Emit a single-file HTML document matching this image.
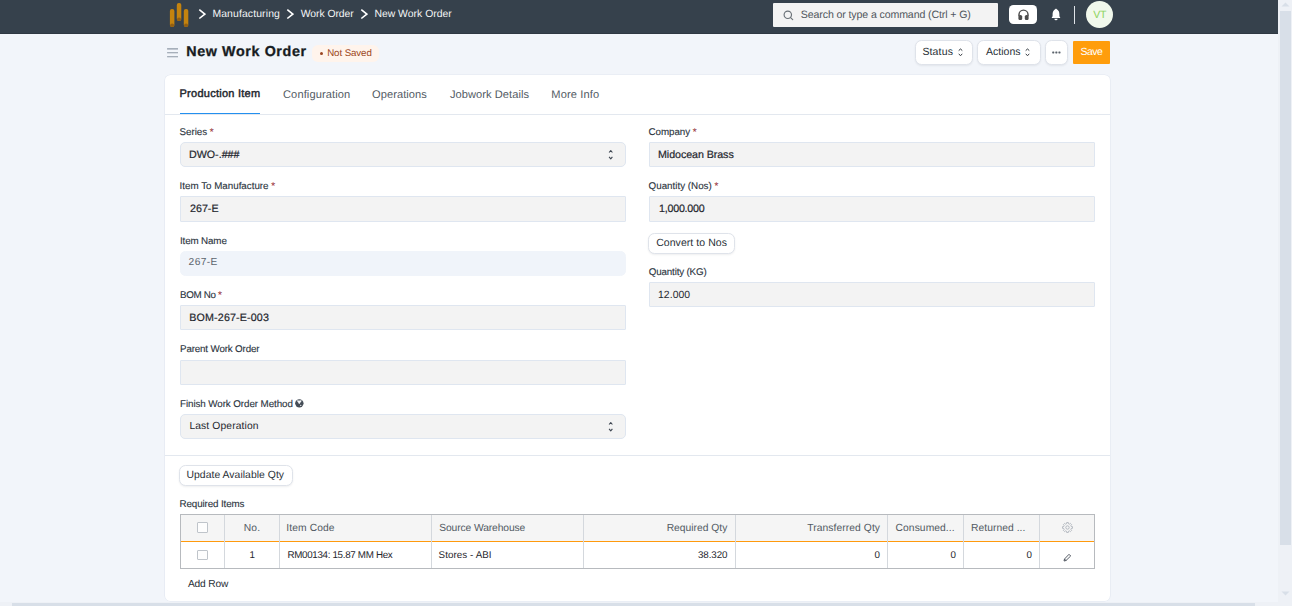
<!DOCTYPE html>
<html lang="en">
<head>
<meta charset="utf-8">
<title>New Work Order</title>
<style>
*{box-sizing:border-box;margin:0;padding:0}
html,body{width:1292px;height:606px;overflow:hidden;background:#f2f5fa}
body{position:relative;font-family:"Liberation Sans",sans-serif;font-size:11.7px;color:#1f272e;-webkit-font-smoothing:antialiased;text-rendering:geometricPrecision}
.abs{position:absolute}
span.t{position:absolute;white-space:nowrap;line-height:1}

/* navbar */
nav.navbar{position:absolute;left:0;top:0;width:1278px;height:34px;background:#36414c;border-bottom:1px solid #2f3842}
nav .crumb{color:#f4f5f6;font-size:10.8px}
.search{position:absolute;left:773px;top:3px;width:225px;height:24px;background:#f3f3f3;border-radius:1px}
.search span{color:#50565c;font-size:10.8px}
.help{position:absolute;left:1008.8px;top:4.7px;width:28.4px;height:19.6px;background:#fff;border-radius:4.5px}
.vbar{position:absolute;left:1074px;top:6px;width:1px;height:18px;background:#dfe3e8}
.avatar{position:absolute;left:1085.9px;top:.7px;width:27.2px;height:27.2px;border-radius:50%;background:#f1f8ec;color:#8ed45c;font-size:11.5px;text-align:center;line-height:27px}

/* page head */
.title{font-weight:bold;font-size:14.4px;color:#171c22;-webkit-text-stroke:.3px #171c22}
.pill{position:absolute;left:312px;top:44.5px;width:67px;height:17px;border-radius:6px;background:#fff4ec}
.pill span{color:#9c4621;font-size:9.9px}
.btn{position:absolute;background:#fff;border-radius:6.5px;border:1px solid #dfe3ea;box-shadow:0 1px 2px rgba(40,50,70,.08);color:#2a3138;font-size:11.7px}
.btn.primary{background:#ff9d0c;color:#fff;border-radius:1px;box-shadow:none;border:0}

/* card */
.card{position:absolute;left:165px;top:75px;width:945px;height:526px;background:#fff;border-radius:5.5px;box-shadow:0 0 0 .6px #e2e7f0}
.tabs{position:absolute;left:0;top:0;width:945px;height:39.5px;border-bottom:1px solid #e3e8ef}
.tab{color:#525a63;font-size:11.7px}
.tab.active{color:#1f272e;-webkit-text-stroke:.45px #1f272e}
.tab-underline{position:absolute;left:15px;top:38px;width:80px;height:1.3px;background:#2490ef}
.sec-border{position:absolute;left:0;top:380px;width:945px;height:1px;background:#e3e8ef}

label.t{position:absolute;white-space:nowrap;line-height:1;color:#2b3440;font-size:10.8px;-webkit-text-stroke:.12px #2b3440}
label .req{color:#e03636}
.ctl{position:absolute;height:24.5px;background:#f3f3f3;border:1px solid #dfe6f0;border-radius:1px;font-size:11.7px;color:#1f272e}
.ctl.sel{border-radius:5px}
.ctl.ro{background:#f0f4fa;border-color:#f0f4fa;border-radius:5.5px;color:#5c646d}
.ctl span{left:9px;top:6px}
.ctl .m{-webkit-text-stroke:.2px #1f272e}

/* grid */
.grid{position:absolute;left:15px;top:439px;width:915px;height:55px;border:1px solid #b7babe;background:#fff}
.grid .head{position:absolute;left:0;top:0;width:913px;height:27.2px;background:#f5f5f5;border-bottom:1.2px solid #ff9a0d}
.grid .vl{position:absolute;top:0;width:1px;height:53px;background:#d4d8dd}
.grid .h{color:#525a63;font-size:11.7px}
.grid .c{color:#1f272e;font-size:10.5px}
.chk{position:absolute;width:11px;height:11px;border:1px solid #bfc4ca;border-radius:1px;background:#fdfdfd}

/* fake scrollbars */
.vscroll{position:absolute;left:1278px;top:0;width:14px;height:606px;background:#eef1f6}
.vscroll .thumb{position:absolute;left:2px;top:11px;width:11px;height:534px;background:#d8dfe8}
.hscroll{position:absolute;left:0;top:601.5px;width:1278px;height:5px;background:#eef1f6}
.hscroll .thumb{position:absolute;left:12px;top:1.5px;width:1243px;height:4px;background:#d8dfe8}

/* text placement */
#c1{left:212.4px;top:9.81px;font-size:10.4px;letter-spacing:0.135px}
#c2{left:300.8px;top:9.81px;font-size:10.4px;letter-spacing:-0.06px}
#c3{left:374.4px;top:9.81px;font-size:10.4px;letter-spacing:0.014px}
#s1{left:27.8px;top:6.65px;font-size:10.6px;letter-spacing:-0.116px}
#title{left:186.2px;top:45.03px;font-size:14.3px;letter-spacing:0.624px}
#ns{left:15.2px;top:4.5px;font-size:9.7px;letter-spacing:-0.078px}
#b1{left:6.4px;top:6.03px;font-size:10.5px;letter-spacing:0.144px}
#b2{left:7.9px;top:6.03px;font-size:10.5px;letter-spacing:0.03px}
#b3{left:7.4px;top:5.93px;font-size:10.5px;letter-spacing:-0.48px}
#t1{left:14.5px;top:13.99px;font-size:11px;letter-spacing:0.257px}
#t2{left:118px;top:14.8px;font-size:11.1px;letter-spacing:0.105px}
#t3{left:207.1px;top:14.8px;font-size:11.1px;letter-spacing:0.04px}
#t4{left:285px;top:14.8px;font-size:11.1px;letter-spacing:0.051px}
#t5{left:386.3px;top:14.8px;font-size:11.1px;letter-spacing:0.135px}
#l1{left:14.6px;top:52.97px;font-size:9.8px;letter-spacing:-0.051px}
#v1{left:8px;top:6.75px;font-size:10.7px;letter-spacing:0px}
#l2{left:14.6px;top:106.56px;font-size:9.8px;letter-spacing:-0.009px}
#v2{left:9px;top:6.75px;font-size:10.7px;letter-spacing:0px}
#l3{left:15px;top:161.76px;font-size:9.8px;letter-spacing:-0.135px}
#v3{left:7.6px;top:6.07px;font-size:10.2px;letter-spacing:0.405px}
#l4{left:15px;top:215.56px;font-size:9.8px;letter-spacing:-0.334px}
#v4{left:8.3px;top:6.26px;font-size:10.7px;letter-spacing:0.15px}
#l5{left:15px;top:269.97px;font-size:9.8px;letter-spacing:-0.158px}
#l6{left:15px;top:324.66px;font-size:9.8px;letter-spacing:-0.078px}
#v6{left:8.4px;top:6.79px;font-size:10.3px;letter-spacing:0.125px}
#r1{left:483.6px;top:52.97px;font-size:9.8px;letter-spacing:-0.068px}
#w1{left:8px;top:6.75px;font-size:10.7px;letter-spacing:-0.069px}
#r2{left:483.6px;top:106.56px;font-size:9.8px;letter-spacing:0px}
#w2{left:9px;top:6.75px;font-size:10.7px;letter-spacing:-0.225px}
#w3{left:7px;top:3.72px;font-size:10.5px;letter-spacing:0.055px}
#r4{left:483.8px;top:193.05px;font-size:9.8px;letter-spacing:-0.165px}
#w4{left:8px;top:7.59px;font-size:10.4px;letter-spacing:0.072px}
#u1{left:6.5px;top:4.59px;font-size:10.4px;letter-spacing:0.038px}
#g0{left:14.6px;top:424.76px;font-size:9.8px;letter-spacing:-0.125px}
#h1{left:62.8px;top:8.9px;font-size:10.3px;letter-spacing:0.09px}
#h2{left:105.2px;top:8.9px;font-size:10.3px;letter-spacing:0.113px}
#h3{left:258.2px;top:8.9px;font-size:10.3px;letter-spacing:-0.108px}
#h4{left:485.7px;top:8.9px;font-size:10.3px;letter-spacing:0px}
#h5{left:626.2px;top:8.9px;font-size:10.3px;letter-spacing:0.077px}
#h6{left:714.6px;top:8.9px;font-size:10.3px;letter-spacing:0.054px}
#h7{left:790px;top:8.9px;font-size:10.3px;letter-spacing:0.049px}
#d1{left:68.6px;top:35.62px;font-size:9.8px;letter-spacing:0px}
#d2{left:106.4px;top:35.62px;font-size:9.8px;letter-spacing:-0.315px}
#d3{left:257.6px;top:35.62px;font-size:9.8px;letter-spacing:0.065px}
#d4{left:516.9px;top:35.62px;font-size:9.8px;letter-spacing:-0.072px}
#d5{left:693.4px;top:35.62px;font-size:9.8px;letter-spacing:0px}
#d6{left:769.4px;top:35.62px;font-size:9.8px;letter-spacing:0px}
#d7{left:845.4px;top:35.62px;font-size:9.8px;letter-spacing:0px}
#ar{left:22.9px;top:504.67px;font-size:10.2px;letter-spacing:-0.135px}
#av{left:7.4px;top:8.83px;font-size:10.6px;letter-spacing:-0.3px}
</style>
</head>
<body>

<nav class="navbar">
  <svg class="abs" style="left:169px;top:2px" width="21" height="26" viewBox="0 0 21 26">
    <rect x="0.9" y="7" width="4.5" height="17.9" rx="2" fill="#c4830f"/><ellipse cx="3.15" cy="23.2" rx="2" ry="1.7" fill="#935f12"/>
    <rect x="7.8" y="0.9" width="4.5" height="18" rx="2" fill="#c4830f"/><ellipse cx="10.05" cy="17.2" rx="2" ry="1.7" fill="#935f12"/>
    <rect x="14.8" y="7" width="4.5" height="17.9" rx="2" fill="#c4830f"/><ellipse cx="17.05" cy="23.2" rx="2" ry="1.7" fill="#935f12"/>
  </svg>
  <svg class="abs" style="left:198px;top:9px" width="8" height="11" viewBox="0 0 8 11"><path d="M1.3 0.7 L6.8 5.1 L1.3 9.5" fill="none" stroke="#fff" stroke-width="1.6"/></svg>
  <span class="t crumb" id="c1">Manufacturing</span>
  <svg class="abs" style="left:286.1px;top:9px" width="8" height="11" viewBox="0 0 8 11"><path d="M1.3 0.7 L6.8 5.1 L1.3 9.5" fill="none" stroke="#fff" stroke-width="1.6"/></svg>
  <span class="t crumb" id="c2">Work Order</span>
  <svg class="abs" style="left:360.4px;top:9px" width="8" height="11" viewBox="0 0 8 11"><path d="M1.3 0.7 L6.8 5.1 L1.3 9.5" fill="none" stroke="#fff" stroke-width="1.6"/></svg>
  <span class="t crumb" id="c3">New Work Order</span>

  <div class="search">
    <svg class="abs" style="left:10px;top:6.5px" width="11" height="11" viewBox="0 0 11 11"><circle cx="4.8" cy="4.8" r="3.7" fill="none" stroke="#6a7177" stroke-width="1.15"/><path d="M7.6 7.6 L9.7 9.7" stroke="#6a7177" stroke-width="1.15" stroke-linecap="round"/></svg>
    <span class="t" id="s1">Search or type a command (Ctrl + G)</span>
  </div>
  <div class="help">
    <svg class="abs" style="left:9.1px;top:4.1px" width="11" height="11.5" viewBox="0 0 11 11.5"><path d="M1 7 V5.6 A4.5 4.5 0 0 1 10 5.6 V7" fill="none" stroke="#4d4d4d" stroke-width="1.45"/><rect x="0.4" y="5.9" width="3.8" height="5.2" rx="1.7" fill="#4d4d4d"/><rect x="6.8" y="5.9" width="3.8" height="5.2" rx="1.7" fill="#4d4d4d"/></svg>
  </div>
  <svg class="abs" style="left:1050.7px;top:8px" width="10" height="13" viewBox="0 0 10 13"><path d="M5 0.6 C5.6 1.3 6.6 1.8 7.4 2.8 C8.2 3.8 8.4 5 8.4 6.5 V8.3 L9.2 9.5 V10 H0.8 V9.5 L1.6 8.3 V6.5 C1.6 5 1.8 3.8 2.6 2.8 C3.4 1.8 4.4 1.3 5 0.6 Z M3.4 10.7 H6.6 A1.6 1.5 0 0 1 3.4 10.7 Z" fill="#fff"/></svg>
  <div class="vbar"></div>
  <div class="avatar"><span class="t" id="av">VT</span></div>
</nav>

<header>
  <svg class="abs" style="left:167px;top:47.7px" width="11.2" height="10" viewBox="0 0 11 10"><path d="M0 0.9 H11 M0 4.8 H11 M0 8.7 H11" stroke="#8d98a5" stroke-width="1.1"/></svg>
  <span class="t title" id="title">New Work Order</span>
  <div class="pill"><i class="abs" style="left:7.6px;top:7.3px;width:3.2px;height:3.2px;border-radius:50%;background:#9c4621"></i><span class="t" id="ns">Not Saved</span></div>

  <div class="btn" style="left:915px;top:40px;width:58px;height:25px"><span class="t" id="b1">Status</span>
    <svg class="abs" style="left:42.2px;top:7.3px" width="5" height="8.5" viewBox="0 0 5 8.5"><path d="M0.7 2.6 L2.5 1 L4.3 2.6 M0.7 6 L2.5 7.5 L4.3 6" fill="none" stroke="#2a3138" stroke-width="1"/></svg></div>
  <div class="btn" style="left:977px;top:40px;width:64px;height:25px"><span class="t" id="b2">Actions</span>
    <svg class="abs" style="left:47.3px;top:7.3px" width="5" height="8.5" viewBox="0 0 5 8.5"><path d="M0.7 2.6 L2.5 1 L4.3 2.6 M0.7 6 L2.5 7.5 L4.3 6" fill="none" stroke="#2a3138" stroke-width="1"/></svg></div>
  <div class="btn" style="left:1045px;top:40px;width:23px;height:25px"><svg class="abs" style="left:5.7px;top:9.8px" width="9" height="3" viewBox="0 0 9 3"><rect x="0.2" y="0.5" width="2.1" height="1.9" rx="0.6" fill="#5a626b"/><rect x="3.3" y="0.5" width="2.1" height="1.9" rx="0.6" fill="#5a626b"/><rect x="6.4" y="0.5" width="2.1" height="1.9" rx="0.6" fill="#5a626b"/></svg></div>
  <div class="btn primary" style="left:1073px;top:41px;width:37px;height:23px"><span class="t" id="b3">Save</span></div>
</header>

<main class="card">
  <div class="tabs">
    <span class="t tab active" id="t1">Production Item</span>
    <span class="t tab" id="t2">Configuration</span>
    <span class="t tab" id="t3">Operations</span>
    <span class="t tab" id="t4">Jobwork Details</span>
    <span class="t tab" id="t5">More Info</span>
    <div class="tab-underline"></div>
  </div>

  <section>
    <label class="t" id="l1">Series <span class="req">*</span></label>
    <div class="ctl sel" style="left:15px;top:67px;width:446px;height:25px"><span class="t m" id="v1">DWO-.###</span>
      <svg class="abs" style="left:427.3px;top:6.3px" width="5.5" height="11.4" viewBox="0 0 5.5 11.4"><path d="M1.1 3.5 L2.75 1.5 L4.4 3.5 M1.1 7.9 L2.75 9.9 L4.4 7.9" fill="none" stroke="#3f4752" stroke-width="1.1" stroke-linejoin="round"/></svg></div>

    <label class="t" id="l2">Item To Manufacture <span class="req">*</span></label>
    <div class="ctl" style="left:15px;top:121px;width:446px;height:25.6px"><span class="t m" id="v2">267-E</span></div>

    <label class="t" id="l3">Item Name</label>
    <div class="ctl ro" style="left:15px;top:176px;width:446px;height:25px"><span class="t" id="v3">267-E</span></div>

    <label class="t" id="l4">BOM No <span class="req">*</span></label>
    <div class="ctl" style="left:15px;top:230.4px;width:446px;height:24.4px"><span class="t m" id="v4">BOM-267-E-003</span></div>

    <label class="t" id="l5">Parent Work Order</label>
    <div class="ctl" style="left:15px;top:285.4px;width:446px;height:24.4px"></div>

    <label class="t" id="l6">Finish Work Order Method</label>
    <svg class="abs" style="left:130.1px;top:324.3px" width="8.7" height="8.7" viewBox="0 0 8.7 8.7"><circle cx="4.35" cy="4.35" r="4.2" fill="#454d57"/><path d="M2.2 1.4 C3 0.9 3.7 1.7 4.4 1.5 C5.1 1.3 5.8 0.8 6.6 1.5 C6.6 2.6 5.7 3.1 5.3 3.8 C4.9 4.4 4.7 5 4.2 4.9 C3.6 4.8 3.5 3.9 3 3.3 C2.5 2.7 2.1 2.2 2.2 1.4 Z M5.4 5.9 C5.9 5.5 6.5 5.8 6.4 6.4 C6.3 6.9 5.7 7.2 5.3 6.9 C5 6.6 5.1 6.2 5.4 5.9 Z" fill="#f4f6f8"/></svg>
    <div class="ctl sel" style="left:15px;top:339.2px;width:446px;height:24.6px"><span class="t" id="v6">Last Operation</span>
      <svg class="abs" style="left:427.3px;top:6.3px" width="5.5" height="11.4" viewBox="0 0 5.5 11.4"><path d="M1.1 3.5 L2.75 1.5 L4.4 3.5 M1.1 7.9 L2.75 9.9 L4.4 7.9" fill="none" stroke="#3f4752" stroke-width="1.1" stroke-linejoin="round"/></svg></div>

    <label class="t" id="r1">Company <span class="req">*</span></label>
    <div class="ctl" style="left:484px;top:67px;width:446px;height:25px"><span class="t m" id="w1">Midocean Brass</span></div>

    <label class="t" id="r2">Quantity (Nos) <span class="req">*</span></label>
    <div class="ctl" style="left:484px;top:121px;width:446px;height:25.6px"><span class="t m" id="w2">1,000.000</span></div>

    <div class="btn" style="left:483.2px;top:158px;width:86.8px;height:21px"><span class="t" id="w3">Convert to Nos</span></div>

    <label class="t" id="r4">Quantity (KG)</label>
    <div class="ctl" style="left:484px;top:207.3px;width:446px;height:24.7px"><span class="t" id="w4">12.000</span></div>
  </section>

  <div class="sec-border"></div>

  <section>
    <div class="btn" style="left:14px;top:390px;width:113.5px;height:21px"><span class="t" id="u1">Update Available Qty</span></div>
    <label class="t" id="g0">Required Items</label>

    <div class="grid">
      <div class="head"></div>
      <div class="vl" style="left:43px"></div>
      <div class="vl" style="left:98px"></div>
      <div class="vl" style="left:250px"></div>
      <div class="vl" style="left:402px"></div>
      <div class="vl" style="left:554px"></div>
      <div class="vl" style="left:706px"></div>
      <div class="vl" style="left:782px"></div>
      <div class="vl" style="left:858px"></div>
      <div class="chk" style="left:16px;top:7px"></div>
      <div class="chk" style="left:16px;top:35px;height:10px;width:10.6px"></div>
      <span class="t h" id="h1">No.</span>
      <span class="t h" id="h2">Item Code</span>
      <span class="t h" id="h3">Source Warehouse</span>
      <span class="t h" id="h4">Required Qty</span>
      <span class="t h" id="h5">Transferred Qty</span>
      <span class="t h" id="h6">Consumed...</span>
      <span class="t h" id="h7">Returned ...</span>
      <svg class="abs" style="left:880.6px;top:7.4px" width="11" height="11" viewBox="0 0 11 11"><path d="M4.64 0.57 L6.36 0.57 L6.47 1.72 L7.49 2.14 L8.38 1.41 L9.59 2.62 L8.86 3.51 L9.28 4.53 L10.43 4.64 L10.43 6.36 L9.28 6.47 L8.86 7.49 L9.59 8.38 L8.38 9.59 L7.49 8.86 L6.47 9.28 L6.36 10.43 L4.64 10.43 L4.53 9.28 L3.51 8.86 L2.62 9.59 L1.41 8.38 L2.14 7.49 L1.72 6.47 L0.57 6.36 L0.57 4.64 L1.72 4.53 L2.14 3.51 L1.41 2.62 L2.62 1.41 L3.51 2.14 L4.53 1.72 Z" fill="none" stroke="#aab0b8" stroke-width="0.85" stroke-linejoin="round"/><circle cx="5.5" cy="5.5" r="1.7" fill="none" stroke="#aab0b8" stroke-width="0.85"/></svg>

      <span class="t c" id="d1">1</span>
      <span class="t c" id="d2">RM00134: 15.87 MM Hex</span>
      <span class="t c" id="d3">Stores - ABI</span>
      <span class="t c" id="d4">38.320</span>
      <span class="t c" id="d5">0</span>
      <span class="t c" id="d6">0</span>
      <span class="t c" id="d7">0</span>
      <svg class="abs" style="left:882.3px;top:38.4px" width="9" height="9" viewBox="0 0 9 9"><path d="M1 8 L1.5 6 L6 1.3 L7.7 3 L3 7.5 Z M1.5 6 L3 7.5" fill="none" stroke="#3a424d" stroke-width="0.85" stroke-linejoin="round"/></svg>
    </div>

    <span class="t" id="ar" style="color:#2a3138">Add Row</span>
  </section>
</main>

<div class="vscroll"><div class="thumb"></div>
  <svg class="abs" style="left:3px;top:2px" width="9" height="5" viewBox="0 0 9 5"><path d="M0.5 4.5 L4.5 0.5 L8.5 4.5 Z" fill="#d8dfe8"/></svg>
  <svg class="abs" style="left:3px;top:591px" width="9" height="5" viewBox="0 0 9 5"><path d="M0.5 0.5 L4.5 4.5 L8.5 0.5 Z" fill="#d8dfe8"/></svg>
</div>
<div class="hscroll"><div class="thumb"></div></div>

</body>
</html>
